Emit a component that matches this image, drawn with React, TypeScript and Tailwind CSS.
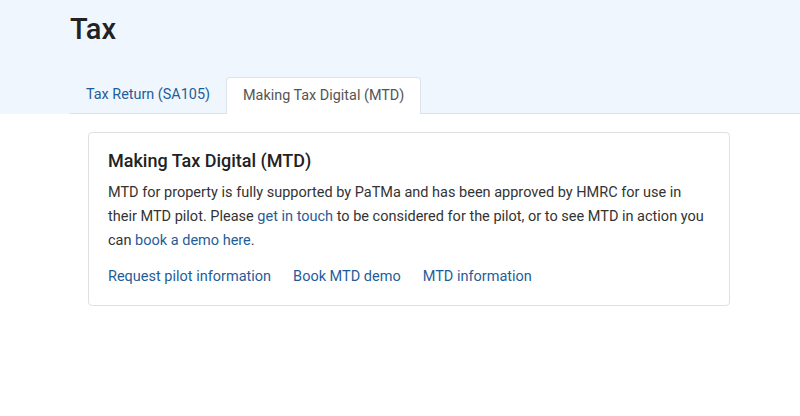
export default function App() {
  return (
    <div className="min-h-screen bg-white font-['Roboto',sans-serif] text-[#333]">
      {/* Header */}
      <div className="bg-[#eff6fd] pl-[70px]">
        <h1 className="pt-[11px] text-[29px] font-medium leading-[36px] text-[#222]">Tax</h1>
        <div className="mt-[30px] flex border-b border-[#dde3ea] text-[14.4px]">
          <a href="#" className="px-4 py-[9px] leading-[18px] text-[#1f5d99]">
            Tax Return (SA105)
          </a>
          <span className="-mb-px rounded-t-[4px] border border-b-0 border-[#dde3ea] bg-white px-4 py-[9px] leading-[18px] text-[#555]">
            Making Tax Digital (MTD)
          </span>
        </div>
      </div>

      {/* Card */}
      <div className="ml-[88px] mt-[18px] w-[642px] rounded-[4px] border border-[#e0e0e0] px-[19px] pb-[16px] pt-[17px]">
        <h2 className="text-[18px] font-medium leading-[22px] text-[#222]">Making Tax Digital (MTD)</h2>
        <p className="mt-[9px] text-[14.5px] leading-[24px]">
          MTD for property is fully supported by PaTMa and has been approved by HMRC for use in their MTD pilot. Please{" "}
          <a href="#" className="text-[#1f5d99]">get in touch</a> to be considered for the pilot, or to see MTD in action you
          can <a href="#" className="text-[#1f5d99]">book a demo here</a>.
        </p>
        <div className="mt-[12px] flex gap-[22px] text-[14.5px] leading-[24px] text-[#1f5d99]">
          <a href="#">Request pilot information</a>
          <a href="#">Book MTD demo</a>
          <a href="#">MTD information</a>
        </div>
      </div>
    </div>
  );
}
